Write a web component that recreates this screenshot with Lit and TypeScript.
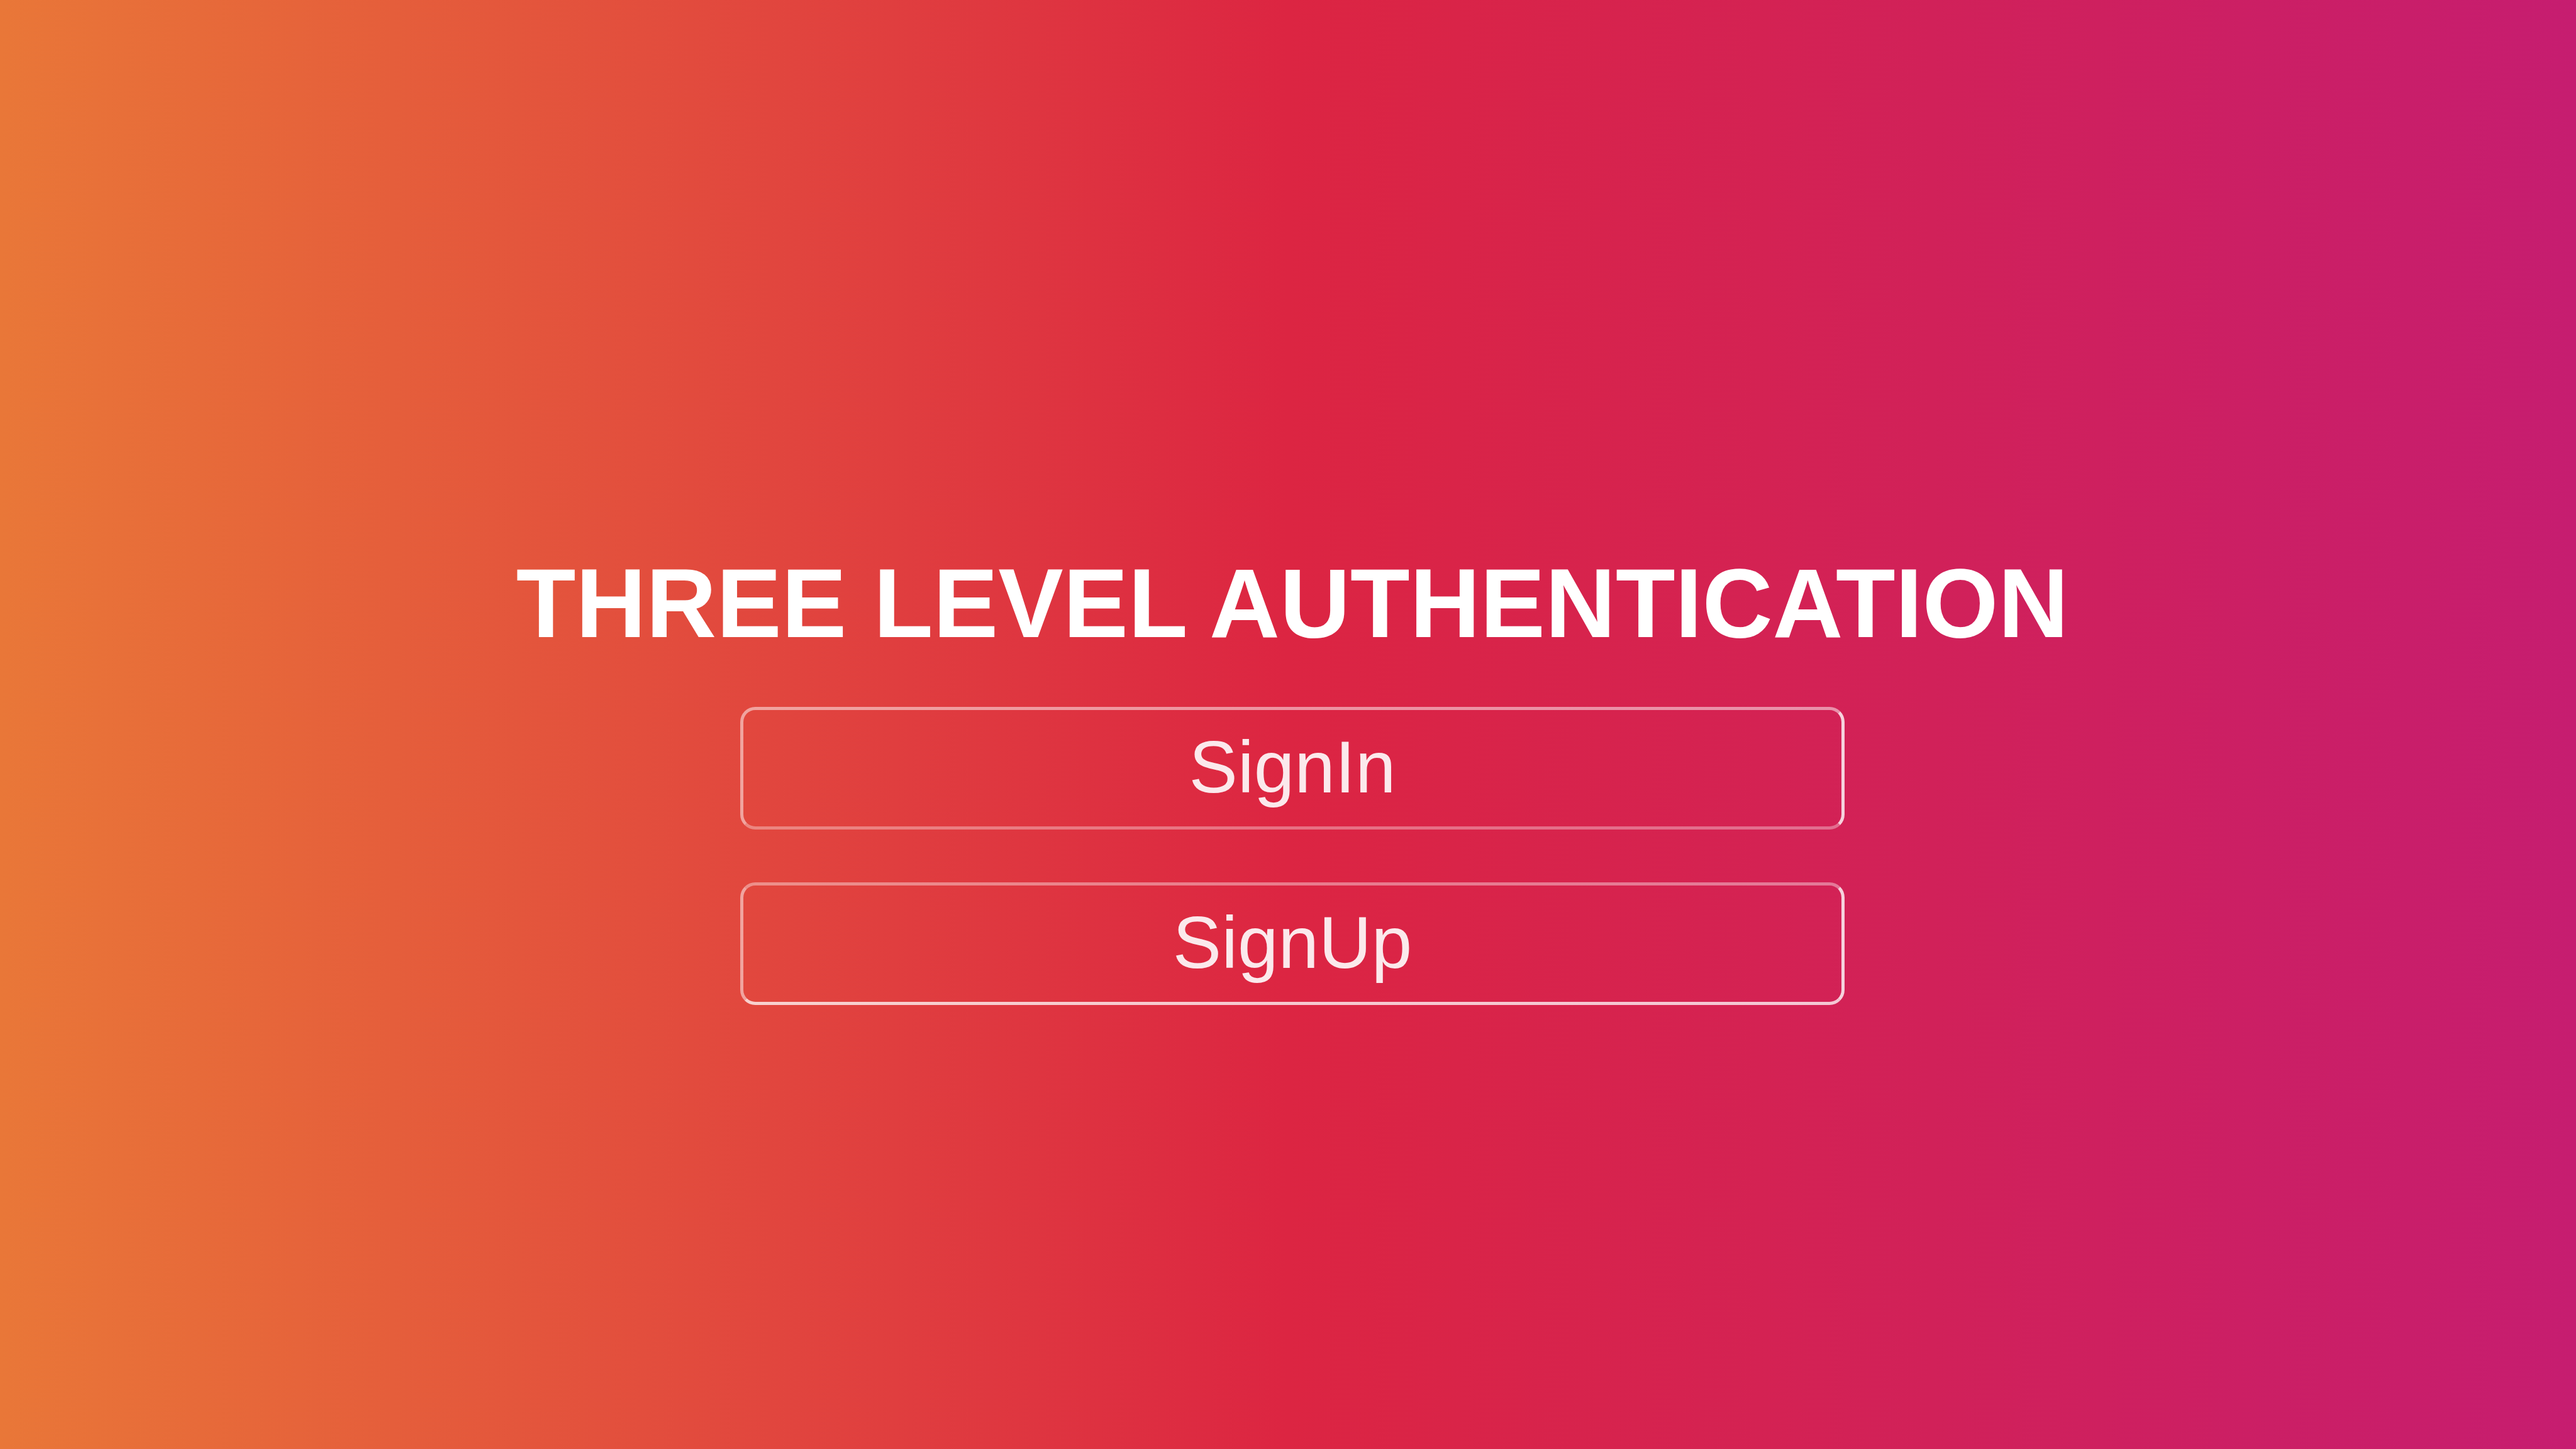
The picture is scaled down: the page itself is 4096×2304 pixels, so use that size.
import { LitElement, html, css } from "lit";
import { customElement } from "lit/decorators.js";

@customElement("app-root")
export class AppRoot extends LitElement {
  static styles = css`
    :host {
      display: block;
      font-family: "Liberation Sans", Arial, sans-serif;
      color: #fff;
    }
    .page {
      min-height: 100vh;
      box-sizing: border-box;
      display: flex;
      flex-direction: column;
      align-items: center;
      padding: 880px 0 0 14px;
      background: linear-gradient(to right, #e97738 0%, #dc2542 50%, #c61d70 100%);
    }
    .title {
      margin: 0 0 84px;
      font-size: 155px;
      line-height: 160px;
      font-weight: 700;
      white-space: nowrap;
    }
    .actions {
      width: 43%;
      display: flex;
      flex-direction: column;
      gap: 84px;
    }
    .action {
      height: 195px;
      padding: 0 0 4px;
      border: 5px solid rgba(255, 255, 255, 0.5);
      border-right-color: rgba(255, 255, 255, 0.8);
      border-radius: 24px;
      background: transparent;
      color: #fbe9ec;
      font: inherit;
      font-size: 116px;
      line-height: 128px;
      cursor: pointer;
    }
    .sign-in {
      border-bottom-color: rgba(255, 255, 255, 0.35);
    }
    .sign-up {
      border-top-color: rgba(255, 255, 255, 0.4);
      border-bottom-color: rgba(255, 255, 255, 0.75);
    }
  `;

  render() {
    return html`
      <main class="page">
        <h1 class="title">THREE LEVEL AUTHENTICATION</h1>
        <div class="actions">
          <button class="action sign-in" type="button">SignIn</button>
          <button class="action sign-up" type="button">SignUp</button>
        </div>
      </main>
    `;
  }
}
